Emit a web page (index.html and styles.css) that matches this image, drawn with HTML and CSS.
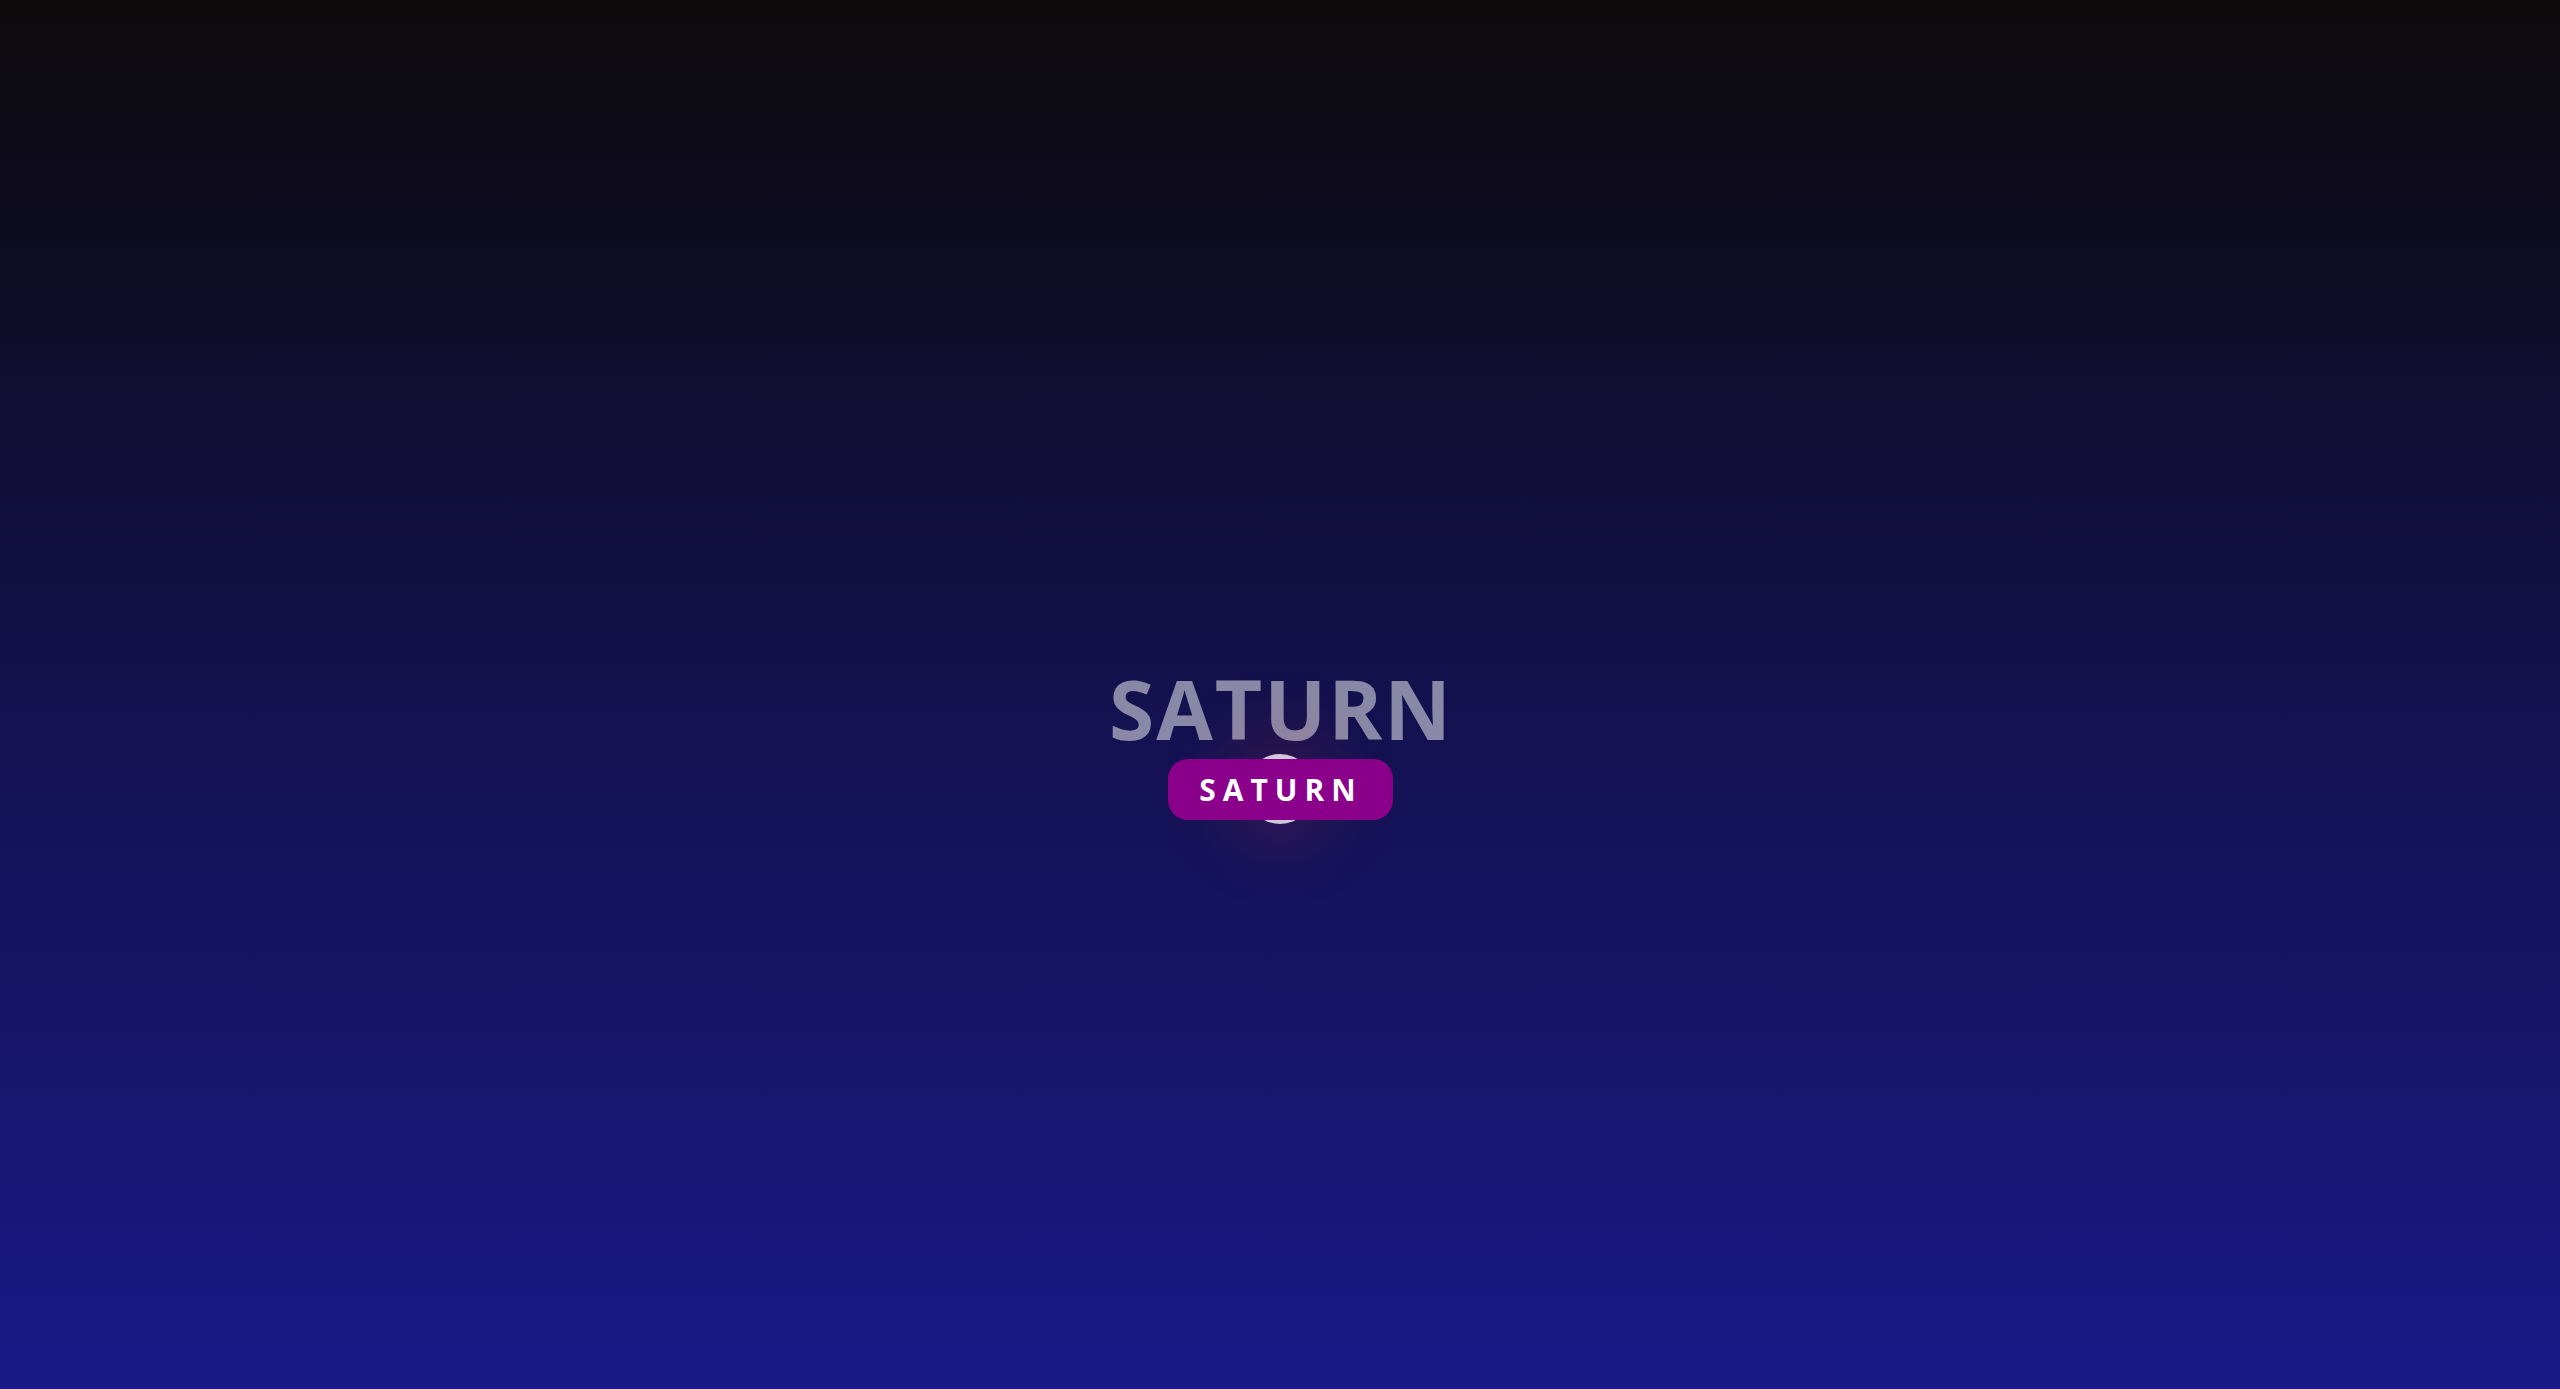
FILE: index.html
```html
<!DOCTYPE html>
<html lang="en">
<head>
<meta charset="utf-8">
<title>Saturn</title>
<link rel="stylesheet" href="styles.css">
</head>
<body>
<main class="stage">
  <h1 class="title">SATURN</h1>
  <div class="planet-wrap">
    <div class="planet"></div>
    <div class="pill">SATURN</div>
  </div>
</main>
</body>
</html>
```
FILE: styles.css
```css
html, body {
  margin: 0;
  height: 100%;
}
body {
  background: linear-gradient(to bottom, #0c0a0a 0%, #131048 45%, #191a88 100%);
  font-family: "Open Sans", "Liberation Sans", sans-serif;
}
.stage {
  height: 100vh;
  box-sizing: border-box;
  padding-top: 97px;
  display: flex;
  flex-direction: column;
  align-items: center;
  justify-content: center;
}
.title {
  margin: 0;
  font-size: 82px;
  font-weight: 700;
  line-height: 1;
  color: rgba(255, 255, 255, 0.5);
  letter-spacing: 2px;
  padding-left: 2px;
}
.planet-wrap {
  position: relative;
  margin-top: 10px;
}
.planet {
  position: absolute;
  left: 50%;
  top: 50%;
  width: 70px;
  height: 70px;
  transform: translate(-50%, -50%);
  border-radius: 50%;
  background: #cdc8dc;
  box-shadow: 0 0 70px 25px rgba(230, 60, 50, 0.14);
}
.pill {
  position: relative;
  width: 225px;
  height: 61px;
  box-sizing: border-box;
  border-radius: 20px;
  background: #8b008b;
  color: #fff;
  font-size: 30px;
  font-weight: 700;
  letter-spacing: 7px;
  display: flex;
  align-items: center;
  justify-content: center;
  padding-left: 2px;
}
```
